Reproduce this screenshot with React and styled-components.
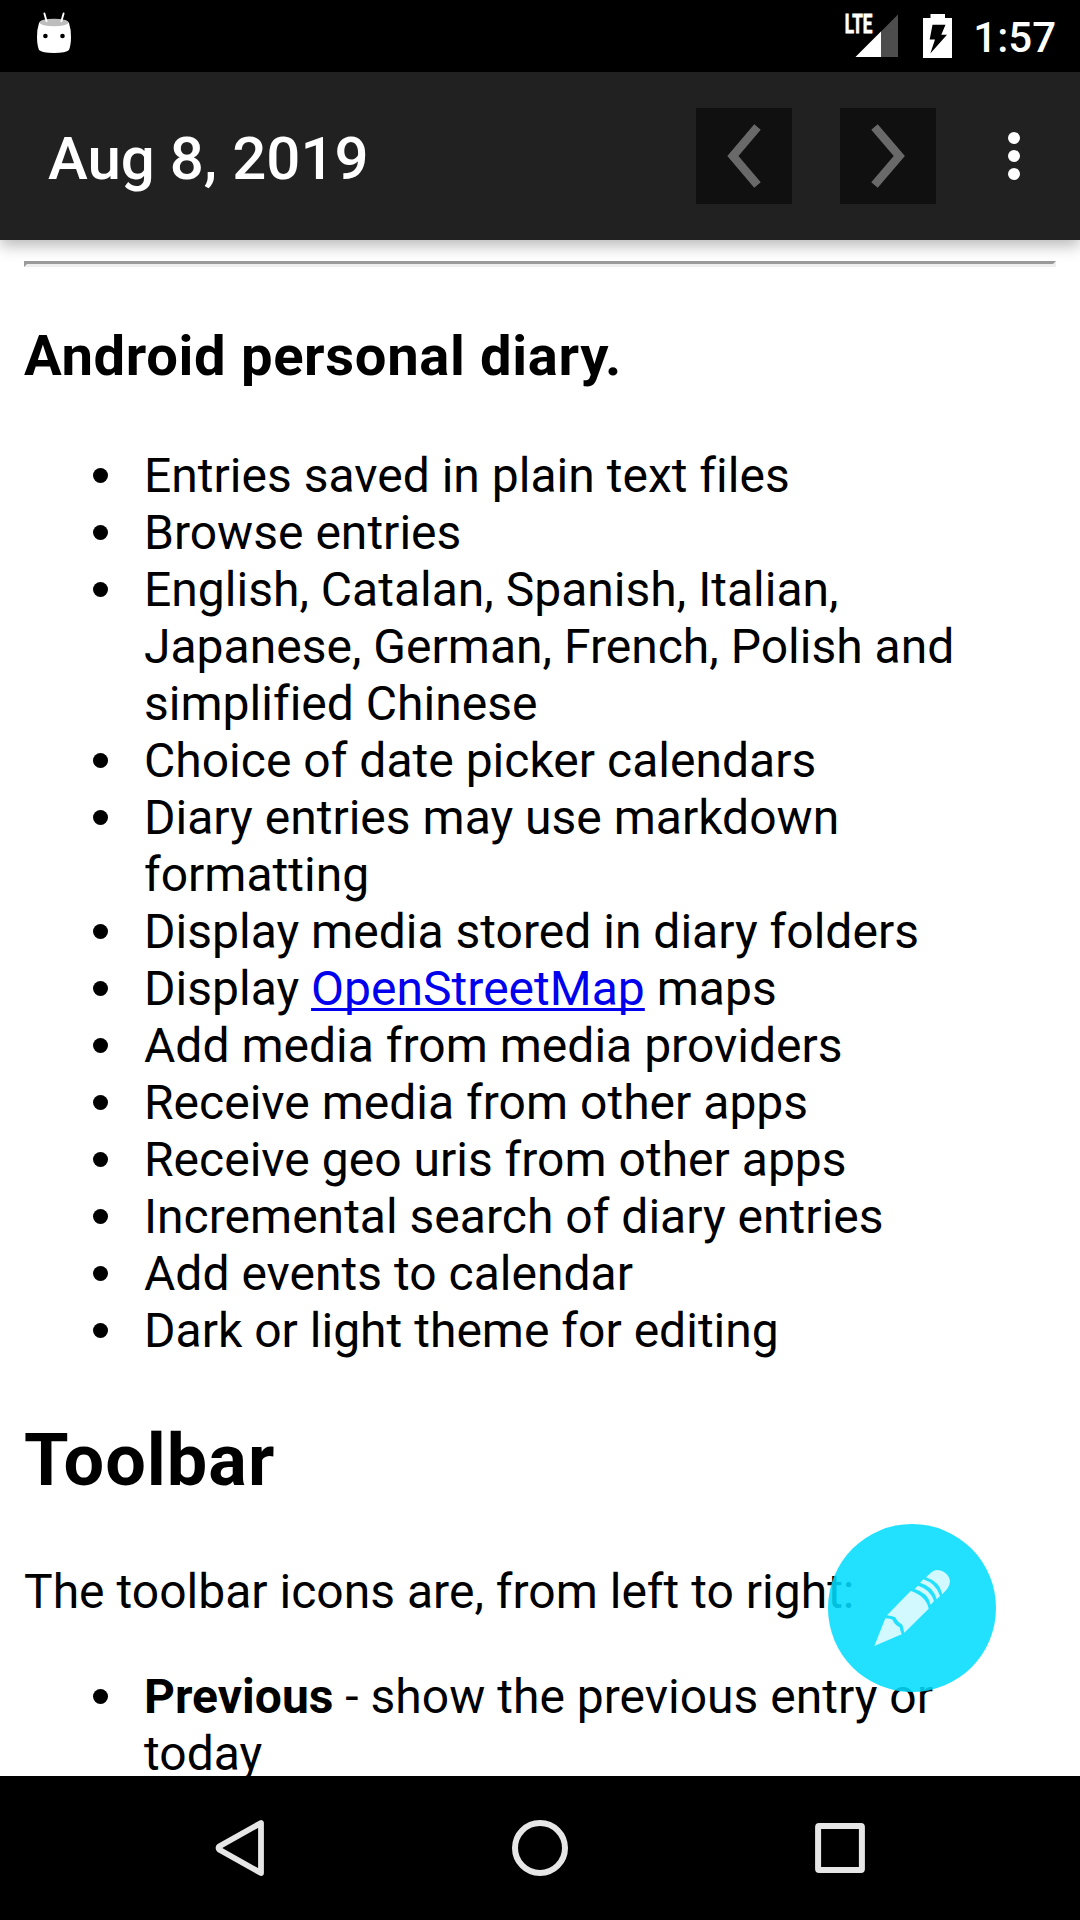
import React from 'react';
import styled, { createGlobalStyle } from 'styled-components';

const GlobalStyle = createGlobalStyle`
  html, body { margin: 0; padding: 0; background: #fff; }
  * { box-sizing: border-box; }
`;

const Screen = styled.div`
  width: 1080px;
  height: 1920px;
  display: flex;
  flex-direction: column;
  overflow: hidden;
  position: relative;
  background: #fff;
  color: #000;
  font-family: Roboto, 'Liberation Sans', sans-serif;
`;

const StatusBar = styled.header`
  flex: none;
  height: 72px;
  padding: 0 24px 0 36px;
  display: flex;
  justify-content: space-between;
  background: #000;
  color: #fff;
`;

const StatusGroup = styled.div`
  display: flex;
  height: 72px;
`;

const Clock = styled.time`
  width: 83px;
  text-align: right;
  font-size: 42px;
  font-weight: 500;
  line-height: 76px;
`;

const AppBar = styled.div`
  flex: none;
  height: 168px;
  padding: 0 36px 0 48px;
  display: flex;
  align-items: center;
  background: #212121;
  color: #fff;
  z-index: 1;
  box-shadow: 0 6px 14px rgba(0, 0, 0, 0.27);
`;

const Title = styled.h1`
  flex: 1;
  margin: 0;
  padding-top: 6px;
  font-size: 60px;
  font-weight: 500;
  line-height: 70px;
`;

const NavButton = styled.button`
  width: 96px;
  height: 96px;
  margin-right: 48px;
  padding: 0;
  border: 0;
  background: #101010;
  display: block;
`;

const MenuButton = styled.button`
  width: 60px;
  height: 96px;
  padding: 0;
  border: 0;
  background: none;
  display: flex;
  flex-direction: column;
  align-items: center;
  justify-content: center;
  gap: 6px;
`;

const MenuDot = styled.span`
  width: 12px;
  height: 12px;
  border-radius: 50%;
  background: #fff;
`;

const Entry = styled.main`
  flex: 1;
  min-height: 0;
  overflow: hidden;
  padding: 21px 24px 0;
  font-size: 48px;
  line-height: 57px;
  letter-spacing: 0.015px;
`;

const Rule = styled.hr`
  margin: 0;
  height: 6px;
  border: 3px solid;
  border-color: #9a9a9a #eee #eee #9a9a9a;
`;

const SubHeading = styled.h3`
  margin: 56px 0 58px;
  font-size: 56.16px;
  line-height: 66px;
  font-weight: 700;
  letter-spacing: 0.64px;
`;

const Heading = styled.h2`
  margin: 60px 0;
  font-size: 72px;
  line-height: 84px;
  font-weight: 700;
  letter-spacing: 1px;
`;

const Paragraph = styled.p`
  margin: 0 0 48px;
`;

const List = styled.ul`
  margin: 0;
  padding: 0 24px 0 69px;
  list-style: none;
`;

const Item = styled.li`
  display: flex;
  gap: 36px;

  &::before {
    content: '';
    flex: none;
    width: 15px;
    height: 15px;
    margin-top: 21px;
    border-radius: 50%;
    background: #000;
  }
`;

const Link = styled.a`
  color: #0000ee;
  text-decoration: underline;
  text-decoration-thickness: 3px;
  text-underline-offset: 3px;
  text-decoration-skip-ink: none;
`;

const Fab = styled.button`
  position: absolute;
  right: 84px;
  bottom: 228px;
  width: 168px;
  height: 168px;
  padding: 0;
  border: 0;
  border-radius: 50%;
  background: rgba(0, 221, 255, 0.87);
`;

const SystemNav = styled.nav`
  flex: none;
  height: 144px;
  padding: 0 165px;
  display: flex;
  align-items: center;
  justify-content: space-between;
  background: #000;
`;

const Icon = styled.svg`
  display: block;
  flex: none;
`;

const RobotIcon = () => (
  <Icon width="36" height="72" viewBox="36 0 36 72">
    <path d="M39 23C43 18 65 18 69 23Q71 29 71 37Q71 45 69 50Q66 53 54 53Q42 53 39 50Q37 45 37 37Q37 29 39 23Z" fill="#fff" />
    <ellipse cx="54" cy="22.5" rx="14.5" ry="3.8" fill="#bdbdbd" />
    <path d="M44.4 13.5L46.6 21.2M63.6 13.5L61.4 21.2" stroke="#fff" strokeWidth="1.9" strokeLinecap="round" />
    <circle cx="45.4" cy="36" r="2.3" />
    <circle cx="62.5" cy="36" r="2.3" />
  </Icon>
);

const SignalIcon = () => (
  <Icon width="58" height="72" viewBox="842 0 58 72">
    <path d="M898 14.5V57H855.5Z" fill="#4d4d4d" />
    <path d="M881 31.5V57H855.5Z" fill="#fff" />
    <text x="844.8" y="33.3" fontSize="25.5" fontWeight="700" fill="#fff" stroke="#fff" strokeWidth="0.8" textLength="27.6" lengthAdjust="spacingAndGlyphs">LTE</text>
  </Icon>
);

const BatteryIcon = () => (
  <Icon width="73" height="72" viewBox="900 0 73 72">
    <path d="M930.5 14H945V18H952V58H923V18H930.5Z" fill="#fff" />
    <path d="M932.5 24.7H945.5L941.3 34.8H947L930.3 53.5L935 39.5H929.7Z" />
  </Icon>
);

const Chevron = ({ next }) => (
  <Icon width="96" height="96" viewBox="0 0 96 96">
    <path d={next ? 'M34.5 19L59.3 48L34.5 77' : 'M61.5 19L36.9 48L61.5 77'} fill="none" stroke="#696969" strokeWidth="8.5" />
  </Icon>
);

const PencilIcon = () => (
  <Icon width="168" height="168" viewBox="84 72 504 504" fill="rgba(255,255,255,0.8)">
    <path d="M223 438L256 355Q272 355 278 360Q282 373 299 382Q301 393 305 403Z" />
    <path d="M261 346L332 273Q378 288 386 326L313 398Q310 386 307 374Q291 365 286 352Q274 347 261 346Z" />
    <path d="M344 267L354 257Q391 268 402 303L392 314Q384 278 344 267Z" />
    <path d="M360 248L370 238Q408 250 420 288L410 298Q400 259 360 248Z" />
    <path d="M378 232L395 216Q410 205 431 215Q448 226 450 243Q450 255 442 266L427 283Q419 245 378 232Z" />
  </Icon>
);

const FEATURES = [
  'Entries saved in plain text files',
  'Browse entries',
  'English, Catalan, Spanish, Italian, Japanese, German, French, Polish and simplified Chinese',
  'Choice of date picker calendars',
  'Diary entries may use markdown formatting',
  'Display media stored in diary folders',
  <>Display <Link href="#">OpenStreetMap</Link> maps</>,
  'Add media from media providers',
  'Receive media from other apps',
  'Receive geo uris from other apps',
  'Incremental search of diary entries',
  'Add events to calendar',
  'Dark or light theme for editing',
];

export default function App() {
  return (
    <Screen>
      <GlobalStyle />
      <StatusBar>
        <RobotIcon />
        <StatusGroup>
          <SignalIcon />
          <BatteryIcon />
          <Clock>1:57</Clock>
        </StatusGroup>
      </StatusBar>
      <AppBar>
        <Title>Aug 8, 2019</Title>
        <NavButton aria-label="Previous"><Chevron /></NavButton>
        <NavButton aria-label="Next"><Chevron next /></NavButton>
        <MenuButton aria-label="More options">
          <MenuDot /><MenuDot /><MenuDot />
        </MenuButton>
      </AppBar>
      <Entry>
        <Rule />
        <SubHeading>Android personal diary.</SubHeading>
        <List>
          {FEATURES.map((feature, i) => <Item key={i}><span>{feature}</span></Item>)}
        </List>
        <Heading>Toolbar</Heading>
        <Paragraph>The toolbar icons are, from left to right:</Paragraph>
        <List>
          <Item><span><b>Previous</b> - show the previous entry or today</span></Item>
        </List>
      </Entry>
      <SystemNav>
        <Icon width="150" height="144" viewBox="165 1776 150 144">
          <path d="M261 1823V1873L219.5 1849.8Q217.5 1848 219.5 1846.2Z" fill="none" stroke="#e6e6e6" strokeWidth="5.8" strokeLinejoin="round" />
        </Icon>
        <Icon width="150" height="144" viewBox="465 1776 150 144">
          <circle cx="540" cy="1848" r="25" fill="none" stroke="#e6e6e6" strokeWidth="6" />
        </Icon>
        <Icon width="150" height="144" viewBox="765 1776 150 144">
          <rect x="818.1" y="1826.1" width="43.8" height="43.8" rx="1" fill="none" stroke="#e6e6e6" strokeWidth="6" strokeLinejoin="round" />
        </Icon>
      </SystemNav>
      <Fab aria-label="Edit"><PencilIcon /></Fab>
    </Screen>
  );
}
